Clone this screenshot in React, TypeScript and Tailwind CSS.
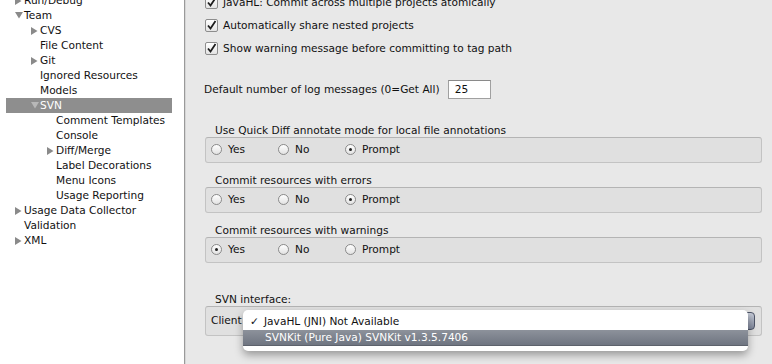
import React from "react"

const font = { fontFamily: '"DejaVu Sans", "Liberation Sans", sans-serif' }

const treeItems = [
  { label: "Run/Debug", level: 0, arrow: "right" },
  { label: "Team", level: 0, arrow: "down" },
  { label: "CVS", level: 1, arrow: "right" },
  { label: "File Content", level: 1 },
  { label: "Git", level: 1, arrow: "right" },
  { label: "Ignored Resources", level: 1 },
  { label: "Models", level: 1 },
  { label: "SVN", level: 1, arrow: "down", selected: true },
  { label: "Comment Templates", level: 2 },
  { label: "Console", level: 2 },
  { label: "Diff/Merge", level: 2, arrow: "right" },
  { label: "Label Decorations", level: 2 },
  { label: "Menu Icons", level: 2 },
  { label: "Usage Reporting", level: 2 },
  { label: "Usage Data Collector", level: 0, arrow: "right" },
  { label: "Validation", level: 0 },
  { label: "XML", level: 0, arrow: "right" },
]

const indent: Record<number, string> = {
  0: "pl-[9px]",
  1: "pl-[25px]",
  2: "pl-[41px]",
}

function Arrow({ dir, light }: { dir?: string; light?: boolean }) {
  const fill = light ? "#b8b8b8" : "#8a8a8a"
  return (
    <span className="w-[9px] h-[15px] flex items-center shrink-0">
      {dir === "right" && (
        <svg width="7" height="8" viewBox="0 0 7 8">
          <polygon points="0,0 6.5,4 0,8" fill={fill} />
        </svg>
      )}
      {dir === "down" && (
        <svg width="8" height="7" viewBox="0 0 8 7">
          <polygon points="0,0 8,0 4,6.5" fill={fill} />
        </svg>
      )}
    </span>
  )
}

function Checkbox() {
  return (
    <span className="w-[13px] h-[13px] rounded-[2px] border border-[#8d8d8d] bg-gradient-to-b from-[#ffffff] to-[#e4e4e4] flex items-center justify-center shrink-0">
      <svg width="11" height="11" viewBox="0 0 11 11">
        <path d="M2 5.5 L4.5 8.5 L9.5 1" stroke="#1e1e1e" strokeWidth="1.8" fill="none" />
      </svg>
    </span>
  )
}

function Radio({ checked }: { checked?: boolean }) {
  return (
    <span className="w-[11px] h-[11px] rounded-full border border-[#8a8a8a] bg-gradient-to-b from-[#ffffff] to-[#e2e2e2] flex items-center justify-center shrink-0">
      {checked && <span className="w-[3px] h-[3px] rounded-full bg-[#222]" />}
    </span>
  )
}

function RadioGroup({ label, selected }: { label: string; selected: string }) {
  return (
    <div className="flex flex-col">
      <div className="h-[14px] leading-[14px] pl-[10px] mt-[10px] whitespace-nowrap">{label}</div>
      <div className="h-[26px] rounded-[3px] border border-[#c3c3c3] border-t-[#b4b4b4] bg-[#e0e0e0] flex items-center pl-[5px]">
        {["Yes", "No", "Prompt"].map((opt) => (
          <div key={opt} className="w-[67px] flex items-center gap-[6px]">
            <Radio checked={opt === selected} />
            <span>{opt}</span>
          </div>
        ))}
      </div>
    </div>
  )
}

export default function App() {
  return (
    <div className="w-[772px] h-[364px] flex overflow-hidden text-[10.6px] text-[#111]" style={font}>
      <div className="w-[185px] h-full bg-white border-r border-[#9a9a9a] shrink-0 overflow-hidden">
        <div className="-mt-[7px] ml-[6px] w-[166px]">
          {treeItems.map((item) => (
            <div
              key={item.label}
              className={`h-[15px] leading-[15px] flex items-center ${indent[item.level]} ${
                item.selected ? "bg-[#8e8e8e] text-white" : ""
              }`}
            >
              <Arrow dir={item.arrow} light={item.selected} />
              <span className="whitespace-nowrap">{item.label}</span>
            </div>
          ))}
        </div>
      </div>

      <div className="flex-1 h-full flex flex-col bg-[#e8e8e8] border-l border-[#d6d6d6] pl-[19px] pr-[10px] overflow-hidden">
        <div className="-mt-[9px] flex flex-col">
          {[
            "JavaHL: Commit across multiple projects atomically",
            "Automatically share nested projects",
            "Show warning message before committing to tag path",
          ].map((t) => (
            <div key={t} className="h-[23px] flex items-center gap-[5px] whitespace-nowrap">
              <Checkbox />
              <span>{t}</span>
            </div>
          ))}
        </div>

        <div className="mt-[20px] h-[19px] flex items-center gap-[8px]">
          <span className="-ml-[1px] whitespace-nowrap">Default number of log messages (0=Get All)</span>
          <div className="w-[43px] h-[19px] bg-white border border-[#a0a0a0] border-t-[#8a8a8a] flex items-center pl-[6px]">
            25
          </div>
        </div>

        <div className="mt-[14px] flex flex-col">
          <RadioGroup label="Use Quick Diff annotate mode for local file annotations" selected="Prompt" />
          <RadioGroup label="Commit resources with errors" selected="Prompt" />
          <RadioGroup label="Commit resources with warnings" selected="Yes" />
        </div>

        <div className="mt-[29px] h-[14px] leading-[14px] pl-[10px]">SVN interface:</div>
        <div className="relative h-[30px] rounded-[3px] border border-[#c3c3c3] border-t-[#b4b4b4] bg-[#e0e0e0] flex items-center pl-[5px] pr-[6px] gap-[4px]">
          <span>Client</span>
          <div className="flex-1 h-[18px] rounded-[4px] border border-[#4e5568] bg-gradient-to-b from-[#c7ccd8] to-[#7f879b]" />

          <div className="absolute left-[37px] top-[3px] w-[505px] pt-[4px] pb-[5px] bg-white rounded-[5px] shadow-[0_4px_8px_rgba(0,0,0,0.35)]">
            <div className="h-[16px] flex items-center">
              <span className="w-[21px] pl-[7px]">✓</span>
              <span>JavaHL (JNI) Not Available</span>
            </div>
            <div className="h-[16px] flex items-center text-white bg-gradient-to-b from-[#8d929b] to-[#6f7581] border-b border-[#5d626c]">
              <span className="w-[22px]" />
              <span>SVNKit (Pure Java) SVNKit v1.3.5.7406</span>
            </div>
          </div>
        </div>
      </div>
    </div>
  )
}
